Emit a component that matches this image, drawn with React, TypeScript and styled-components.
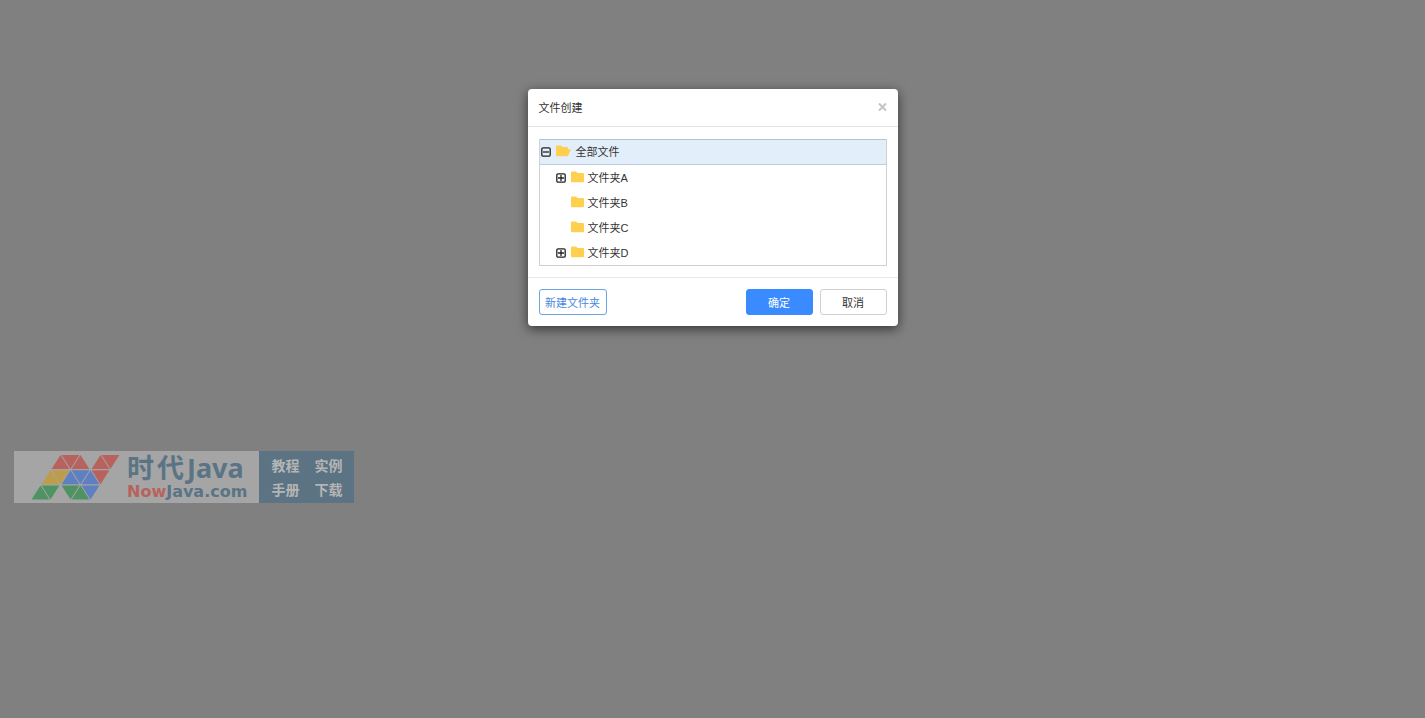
import React from "react";
import styled, { createGlobalStyle, css } from "styled-components";

const Global = createGlobalStyle`
  * { box-sizing: border-box; }
  body {
    margin: 0;
    background: #808080;
    font-family: "Liberation Sans", "Noto Sans CJK SC", sans-serif;
    font-size: 11px;
    color: #333;
  }
  button { font: inherit; cursor: pointer; }
`;

const Page = styled.main`
  display: flex;
  flex-direction: column;
  padding: 89px 14px 0;
  gap: 125px;
`;

const Dialog = styled.section`
  align-self: center;
  width: 370px;
  max-width: 100%;
  background: #fff;
  border-radius: 4px;
  box-shadow: 0 3px 12px rgba(0, 0, 0, 0.6);
`;

const Header = styled.header`
  display: flex;
  align-items: center;
  justify-content: space-between;
  height: 38px;
  padding: 0 11px;
  border-bottom: 1px solid #e5e5e5;
`;

const Title = styled.h1`
  margin: 0;
  font-size: 11px;
  font-weight: 400;
  line-height: 16px;
`;

const Close = styled.button`
  display: flex;
  padding: 0;
  border: 0;
  background: none;
  color: #c4c4c4;
`;

const Body = styled.div`
  padding: 12px 11px 11px;
  border-bottom: 1px solid #e8e8e8;
`;

const Tree = styled.ul`
  margin: 0;
  padding: 0;
  list-style: none;
  border: 1px solid #d0d0d0;
  border-top: 0;
`;

const Branch = styled.ul`
  margin: 0;
  padding: 0;
  list-style: none;
`;

const Row = styled.div<{ $selected?: boolean }>`
  display: flex;
  align-items: center;
  height: 25px;
  padding-left: 16px;
  ${(p) =>
    p.$selected &&
    css`
      height: 26px;
      padding-left: 1px;
      background: #e3eefb;
      border-top: 1px solid #afc6d8;
      border-bottom: 1px solid #b9cfe0;
    `}
`;

const Toggle = styled.button`
  display: flex;
  padding: 0;
  border: 0;
  background: none;
  color: #222;
`;

const Spacer = styled.span`
  width: 10px;
`;

const Label = styled.span<{ $wide?: boolean }>`
  margin-left: ${(p) => (p.$wide ? 5 : 4)}px;
  line-height: 16px;
`;

const FolderArt = styled.svg`
  margin-left: 5px;
  margin-bottom: 2px;
  fill: #ffd04f;
`;

const Footer = styled.footer`
  display: flex;
  gap: 7px;
  padding: 11px;
`;

const Button = styled.button<{ $kind: "outline" | "primary" | "plain" }>`
  width: 67px;
  height: 26px;
  padding: 0;
  border: 1px solid #d0d0d0;
  border-radius: 3px;
  background: #fff;
  color: #333;
  ${(p) =>
    p.$kind === "outline" &&
    css`
      width: 68px;
      margin-right: auto;
      border-color: #6ba3de;
      color: #4a88e0;
    `}
  ${(p) =>
    p.$kind === "primary" &&
    css`
      border-color: #3a8bff;
      background: #3a8bff;
      color: #fff;
    `}
`;

const Banner = styled.a`
  display: flex;
  align-self: flex-start;
  height: 52px;
  background: #a5a5a5;
  color: #5a7485;
  font-family: "Noto Sans", "Noto Sans CJK SC", sans-serif;
  font-weight: 700;
  text-decoration: none;
`;

const Mark = styled.svg`
  margin-left: 16px;
`;

const Brand = styled.span`
  display: flex;
  flex-direction: column;
  width: 137px;
  padding-left: 5px;
`;

const BrandName = styled.span`
  display: flex;
  gap: 3px;
  font-size: 27px;
  line-height: 34px;
  white-space: nowrap;
`;

const Site = styled.span`
  font-family: "DejaVu Sans", sans-serif;
  font-size: 16px;
  line-height: 14px;
`;

const Now = styled.span`
  color: #b8625e;
`;

const Topics = styled.span`
  display: grid;
  grid-template-columns: auto auto;
  align-content: center;
  justify-content: center;
  column-gap: 15px;
  width: 95px;
  padding: 2px 0 0 1px;
  background: #5b7383;
  color: #b5b5b5;
  font-size: 14px;
  line-height: 24px;
`;

function ToggleIcon({ open, label }: { open?: boolean; label: string }) {
  return (
    <Toggle type="button" aria-label={label} aria-expanded={!!open}>
      <svg width="10" height="10" viewBox="0 0 10 10" fill="none" stroke="currentColor" strokeWidth="1.3">
        <rect x="0.8" y="0.8" width="8.4" height="8.4" rx="1.3" />
        <path d={open ? "M2 5h6" : "M2 5h6M5 2v6"} />
      </svg>
    </Toggle>
  );
}

function Folder({ open }: { open?: boolean }) {
  return (
    <FolderArt width={open ? 15 : 13} height="12" viewBox={open ? "0 0 15 12" : "0 0 13 12"} aria-hidden="true">
      {open ? (
        <path d="M1 0.5H5Q6 0.5 6.4 2H11Q12 2 12 3V4.2H14.3Q15 4.4 14.6 5.2L12.2 10.5Q11.8 11.3 11 11.3H1Q0 11.3 0 10.3V1.5Q0 0.5 1 0.5Z" />
      ) : (
        <path d="M1 0.5H5Q6 0.5 6.4 2H12Q13 2 13 3V10.3Q13 11.3 12 11.3H1Q0 11.3 0 10.3V1.5Q0 0.5 1 0.5Z" />
      )}
    </FolderArt>
  );
}

const folders = [
  { name: "文件夹A", expandable: true },
  { name: "文件夹B", expandable: false },
  { name: "文件夹C", expandable: false },
  { name: "文件夹D", expandable: true },
];

const red = "#b8625e";
const yellow = "#bd9c4c";
const green = "#4f9363";
const blue = "#5e7fc0";

/* Each cell: lattice column, row and colour; even column + row sums point up. */
const cells: [number, number, string][] = [
  [2, 0, red], [3, 0, red], [4, 0, red], [6, 0, red], [7, 0, red],
  [1, 1, yellow], [2, 1, yellow], [3, 1, blue], [4, 1, blue], [5, 1, blue], [6, 1, red],
  [0, 2, green], [1, 2, green], [3, 2, green], [4, 2, green], [5, 2, blue],
];

function NMark() {
  return (
    <Mark width="92" height="52" viewBox="0 0 92 52" aria-hidden="true">
      {cells.map(([c, r, fill]) => {
        const x = 10.5 + c * 10;
        const top = 4 + r * 15.2;
        const up = (c + r) % 2 === 0;
        const base = up ? top + 14 : top;
        const apex = up ? top : top + 14;
        return <polygon key={`${c}-${r}`} points={`${x - 8.9},${base} ${x + 8.9},${base} ${x},${apex}`} fill={fill} />;
      })}
    </Mark>
  );
}

export default function App() {
  return (
    <>
      <Global />
      <Page>
        <Dialog role="dialog" aria-labelledby="dialog-title">
          <Header>
            <Title id="dialog-title">文件创建</Title>
            <Close type="button" aria-label="关闭">
              <svg width="9" height="9" viewBox="0 0 9 9" stroke="currentColor" strokeWidth="2">
                <path d="M1 0.5l7 7M8 0.5L1 7.5" />
              </svg>
            </Close>
          </Header>
          <Body>
            <Tree>
              <li>
                <Row $selected>
                  <ToggleIcon open label="收起" />
                  <Folder open />
                  <Label $wide>全部文件</Label>
                </Row>
                <Branch>
                  {folders.map((f) => (
                    <li key={f.name}>
                      <Row>
                        {f.expandable ? <ToggleIcon label="展开" /> : <Spacer />}
                        <Folder />
                        <Label>{f.name}</Label>
                      </Row>
                    </li>
                  ))}
                </Branch>
              </li>
            </Tree>
          </Body>
          <Footer>
            <Button type="button" $kind="outline">新建文件夹</Button>
            <Button type="button" $kind="primary">确定</Button>
            <Button type="button" $kind="plain">取消</Button>
          </Footer>
        </Dialog>
        <Banner href="#">
          <NMark />
          <Brand>
            <BrandName>
              <span>时</span>
              <span>代</span>
              <span>Java</span>
            </BrandName>
            <Site>
              <Now>Now</Now>Java.com
            </Site>
          </Brand>
          <Topics>
            <span>教程</span>
            <span>实例</span>
            <span>手册</span>
            <span>下载</span>
          </Topics>
        </Banner>
      </Page>
    </>
  );
}
